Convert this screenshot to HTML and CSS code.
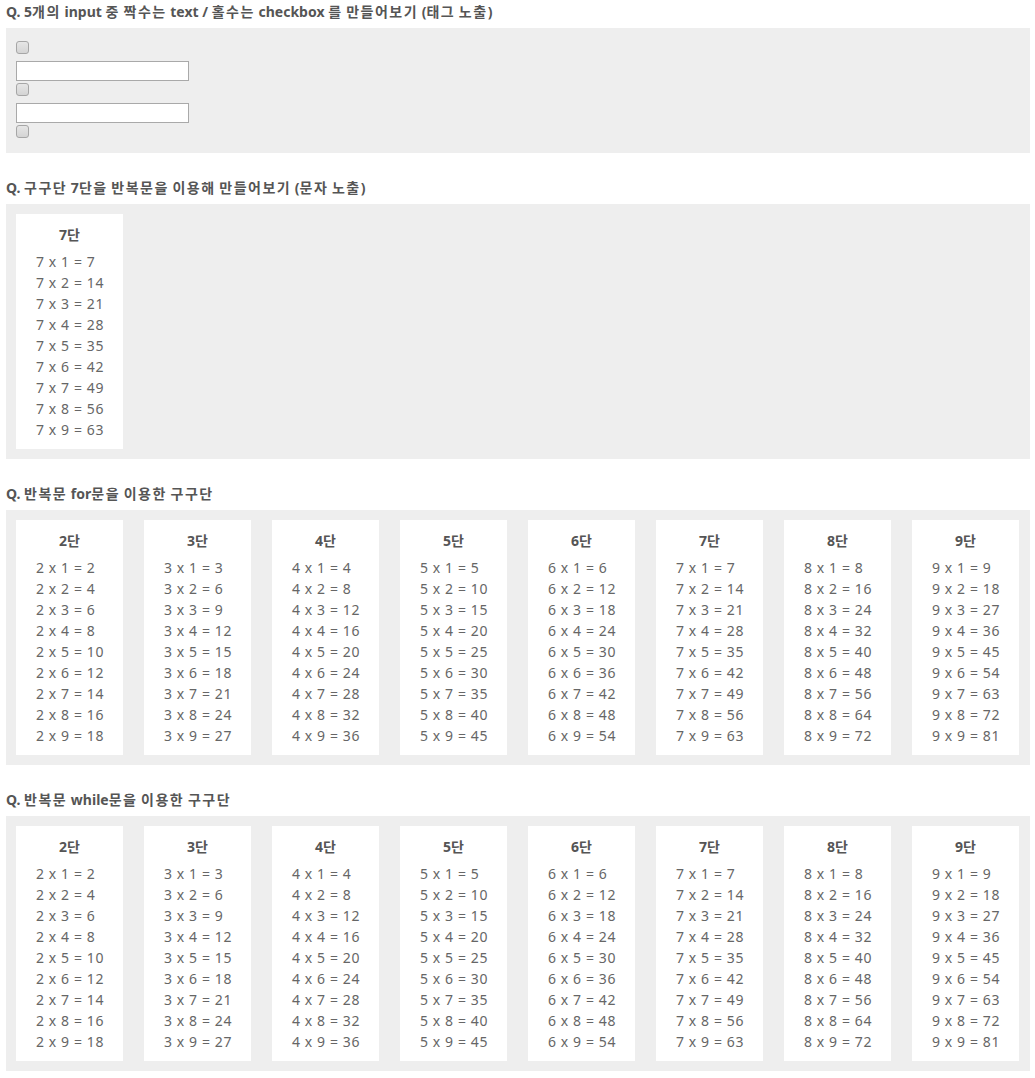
FILE: index.html
```html
<!DOCTYPE html>
<html lang="ko">
<head>
<meta charset="utf-8">
<title>구구단</title>
<link rel="stylesheet" href="styles.css">
</head>
<body>
<div class="page">
  <section class="sec sec-first">
    <h3 class="q-title">Q. 5<span class="ko">개의</span> input <span class="ko">중</span> <span class="ko">짝수는</span> text / <span class="ko">홀수는</span> checkbox <span class="ko">를</span> <span class="ko">만들어보기</span> (<span class="ko">태그</span> <span class="ko">노출</span>)</h3>
    <div class="box box-inputs">
      <input type="checkbox" class="chk">
      <input type="text" class="txt">
      <input type="checkbox" class="chk">
      <input type="text" class="txt">
      <input type="checkbox" class="chk chk-last">
    </div>
  </section>

  <section class="sec">
    <h3 class="q-title">Q. <span class="ko">구구단</span> 7<span class="ko">단을</span> <span class="ko">반복문을</span> <span class="ko">이용해</span> <span class="ko">만들어보기</span> (<span class="ko">문자</span> <span class="ko">노출</span>)</h3>
    <div class="box box-tables" id="single"></div>
  </section>

  <section class="sec">
    <h3 class="q-title">Q. <span class="ko">반복문</span> for<span class="ko">문을</span> <span class="ko">이용한</span> <span class="ko">구구단</span></h3>
    <div class="box box-tables" id="forTables"></div>
  </section>

  <section class="sec">
    <h3 class="q-title">Q. <span class="ko">반복문</span> while<span class="ko">문을</span> <span class="ko">이용한</span> <span class="ko">구구단</span></h3>
    <div class="box box-tables" id="whileTables"></div>
  </section>
</div>
<script src="script.js"></script>
</body>
</html>
```

FILE: styles.css
```css
html, body {
  margin: 0;
  padding: 0;
  background: #fff;
}
body {
  font-family: "Noto Sans", "Noto Sans CJK KR", sans-serif;
  color: #555;
}
.page {
  padding: 0 5px 0 6px;
}
.sec {
  margin-top: 25px;
}
.sec-first {
  margin-top: 2px;
}
.q-title {
  margin: 0 0 6px;
  font-size: 14px;
  line-height: 20px;
  font-weight: 700;
  color: #555;
}
.ko {
  letter-spacing: 1.5px;
}
.box {
  background: #eee;
  padding: 10px;
}
.box-inputs {
  padding: 13px 10px 15px;
  display: flex;
  flex-direction: column;
  align-items: flex-start;
}
.chk {
  appearance: none;
  -webkit-appearance: none;
  display: block;
  width: 13px;
  height: 13px;
  margin: 0 0 7px;
  box-sizing: border-box;
  border: 1px solid #a6a6a6;
  border-radius: 3px;
  background: linear-gradient(#e6e6e6, #d4d4d4);
}
.chk-last {
  margin-bottom: 0;
}
.txt {
  display: block;
  width: 173px;
  height: 20px;
  box-sizing: border-box;
  margin: 0 0 2px;
  padding: 0 3px;
  border: 1px solid #a9a9a9;
  background: #fff;
}
.box-tables {
  display: flex;
  gap: 21px;
}
.card {
  width: 107px;
  box-sizing: border-box;
  background: #fff;
  padding: 11px 0 9px 20px;
}
.card-title {
  margin: 0 0 6px -20px;
  font-size: 14px;
  line-height: 20px;
  font-weight: 700;
  text-align: center;
  color: #555;
}
.card-title .ko {
  letter-spacing: 0;
}
.row {
  font-size: 14px;
  line-height: 21px;
  color: #666;
  letter-spacing: 0.6px;
  white-space: pre;
}
```

FILE: script.js
```js
function makeCard(dan) {
  var card = document.createElement('div');
  card.className = 'card';
  var t = document.createElement('div');
  t.className = 'card-title';
  t.textContent = dan + '단';
  card.appendChild(t);
  for (var i = 1; i <= 9; i++) {
    var r = document.createElement('div');
    r.className = 'row';
    r.textContent = dan + ' x ' + i + ' = ' + (dan * i);
    card.appendChild(r);
  }
  return card;
}
document.getElementById('single').appendChild(makeCard(7));
var f = document.getElementById('forTables');
for (var d = 2; d <= 9; d++) f.appendChild(makeCard(d));
var w = document.getElementById('whileTables');
var k = 2;
while (k <= 9) { w.appendChild(makeCard(k)); k++; }
```
